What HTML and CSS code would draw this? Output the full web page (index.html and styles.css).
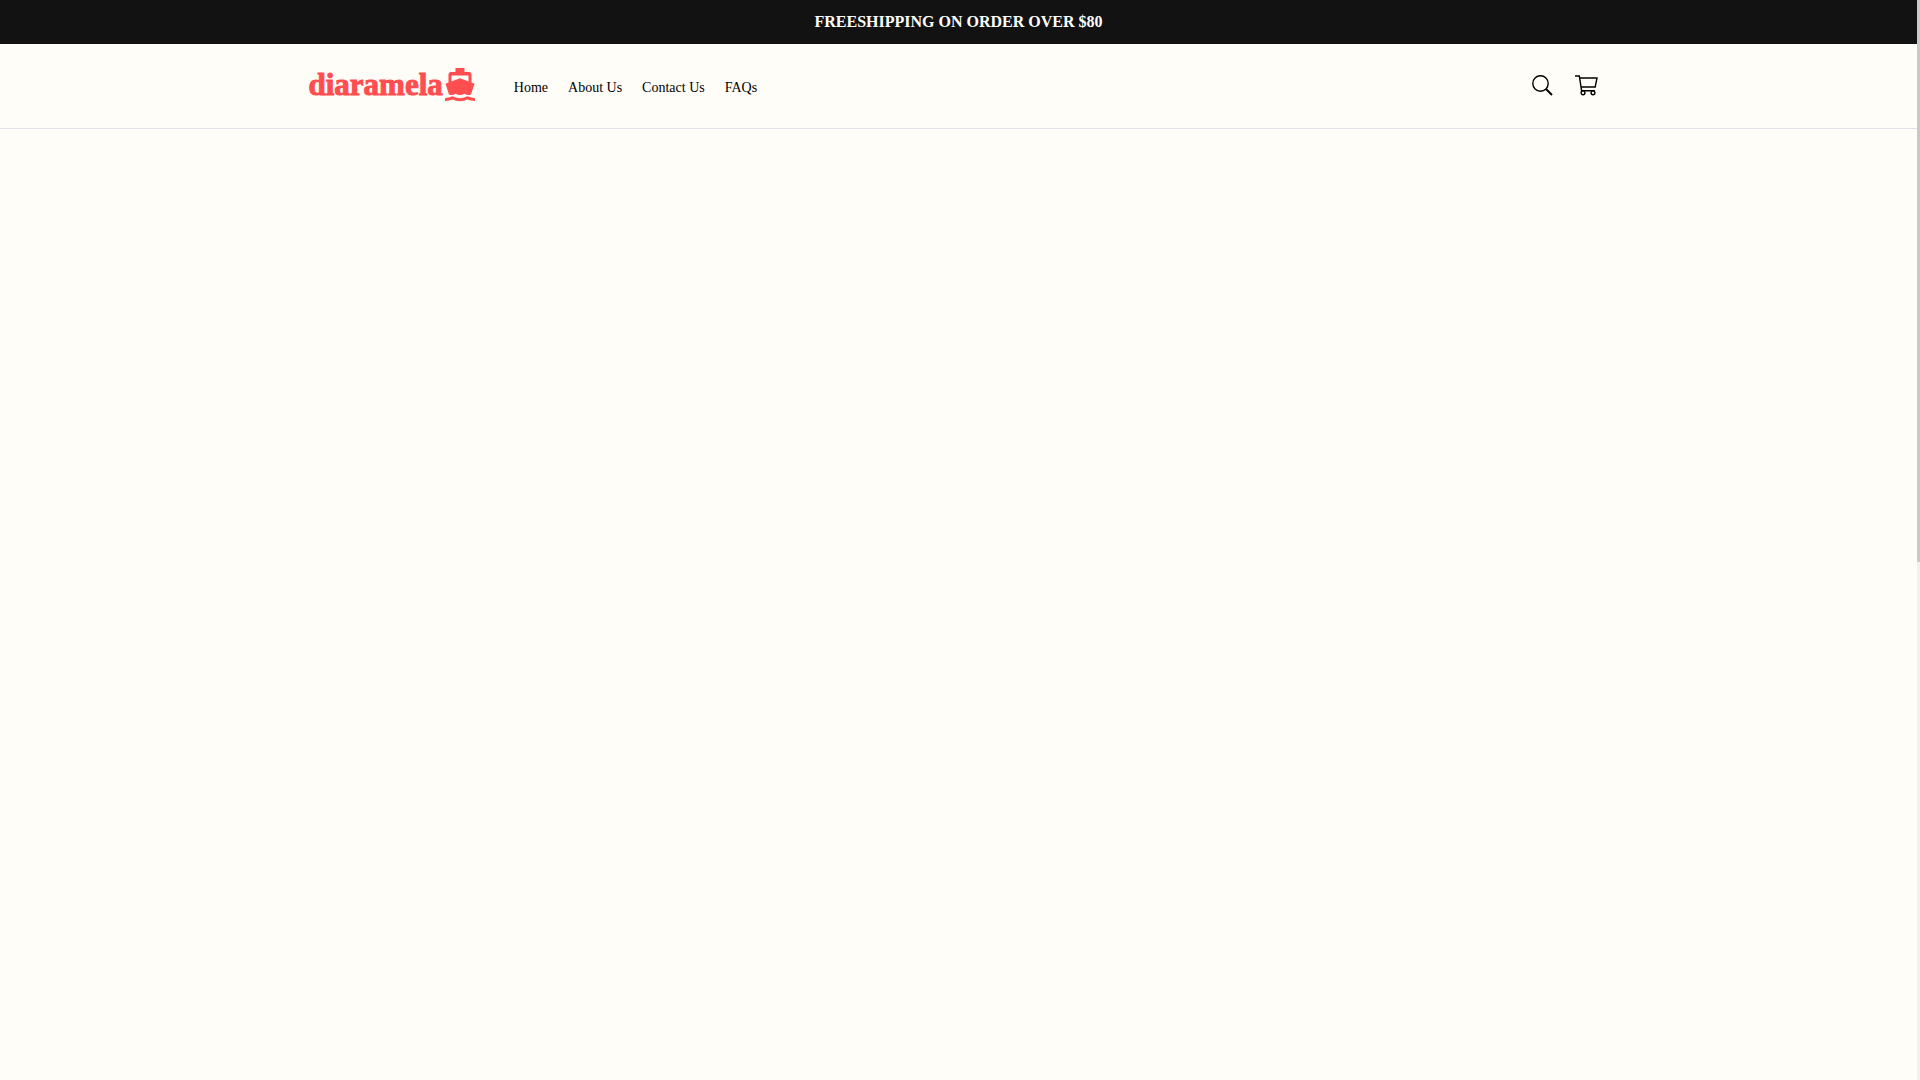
FILE: index.html
```html
<!DOCTYPE html>
<html lang="en">
<head>
<meta charset="utf-8">
<meta name="viewport" content="width=device-width, initial-scale=1">
<title>diaramela</title>
<link rel="stylesheet" href="styles.css">
</head>
<body>
<div class="announcement">FREESHIPPING ON ORDER OVER $80</div>
<header class="header">
  <div class="container">
    <a class="logo" href="#">
      <span class="logo-text">diaramela</span>
      <svg class="logo-ship" viewBox="0 0 30 34" aria-hidden="true">
        <path fill="currentColor" fill-rule="evenodd" d="M10.500 0h9v4h4.500q2.500 0 2.500 2.500v8l3 1.200-3.500 10.800q-3.500 1.500-6.500-.8-4.500 2.500-9 0-3 2.300-6.500.8L.500 15.700l3-1.200v-8Q3.500 4 6 4h4.500zM6.500 7.500v6L15 10.200l8.500 3.300v-6z"/>
        <path fill="none" stroke="currentColor" stroke-width="3" d="M0 31.500c3.500 0 5-.3 7.500-1.600 5 2.600 10 2.600 15 0 2.500 1.300 4 1.600 7.500 1.600"/>
      </svg>
    </a>
    <nav class="nav" aria-label="Main">
      <a href="#">Home</a>
      <a href="#">About Us</a>
      <a href="#">Contact Us</a>
      <a href="#">FAQs</a>
    </nav>
    <div class="actions">
      <button class="icon-button" type="button" aria-label="Search">
        <svg viewBox="0 0 24 24" aria-hidden="true"><circle cx="10.500" cy="10.500" r="7.700"/><path d="M16 16l6 6" stroke-width="2"/></svg>
      </button>
      <button class="icon-button" type="button" aria-label="Cart">
        <svg viewBox="0 0 24 24" aria-hidden="true"><path d="M1 3h4.300l2.300 14.700h13.400M5.700 5h17.300l-1.800 9H7.100"/><circle cx="9" cy="19.800" r="1.900"/><circle cx="19" cy="19.800" r="1.900"/></svg>
      </button>
    </div>
  </div>
</header>
<main></main>
<div class="scroll-track" aria-hidden="true"><div class="scroll-thumb"></div></div>
</body>
</html>
```
FILE: styles.css
```css
* {
  box-sizing: border-box;
}

body {
  margin: 0;
  padding-right: 3px;
  min-height: 100vh;
  background: #fffdf8;
  color: #000;
  font-family: "Liberation Serif", "Times New Roman", serif;
}

.announcement {
  padding: 12px 16px;
  background: #121212;
  color: #fff;
  font-size: 16px;
  font-weight: 700;
  line-height: 20px;
  text-align: center;
}

.header {
  border-bottom: 1px solid #e1e3e8;
}

.container {
  display: flex;
  align-items: center;
  max-width: 1300px;
  min-height: 84px;
  margin: 0 auto;
  padding-bottom: 2px;
}

.logo {
  display: flex;
  align-items: center;
  gap: 2px;
  color: #ff4d50;
  text-decoration: none;
}

.logo-text {
  font-size: 31px;
  font-weight: 700;
  line-height: 36px;
  -webkit-text-stroke: 1px currentColor;
}

.logo-ship {
  width: 30px;
  height: 34px;
}

.nav {
  display: flex;
  gap: 20px;
  margin-left: 39px;
  padding-top: 6px;
}

.nav a {
  color: #000;
  font-size: 14px;
  line-height: 20px;
  text-decoration: none;
}

.actions {
  display: flex;
  gap: 20px;
  margin-left: auto;
  padding-right: 11px;
}

.icon-button {
  padding: 0;
  border: 0;
  background: none;
  color: #000;
  cursor: pointer;
}

.icon-button svg {
  display: block;
  width: 24px;
  height: 24px;
  fill: none;
  stroke: currentColor;
  stroke-width: 1.4;
}

.scroll-track {
  position: fixed;
  inset: 0 0 0 auto;
  width: 3px;
  background: #f1f1f1;
}

.scroll-thumb {
  height: 52%;
  background: #c9c9c9;
}
```
